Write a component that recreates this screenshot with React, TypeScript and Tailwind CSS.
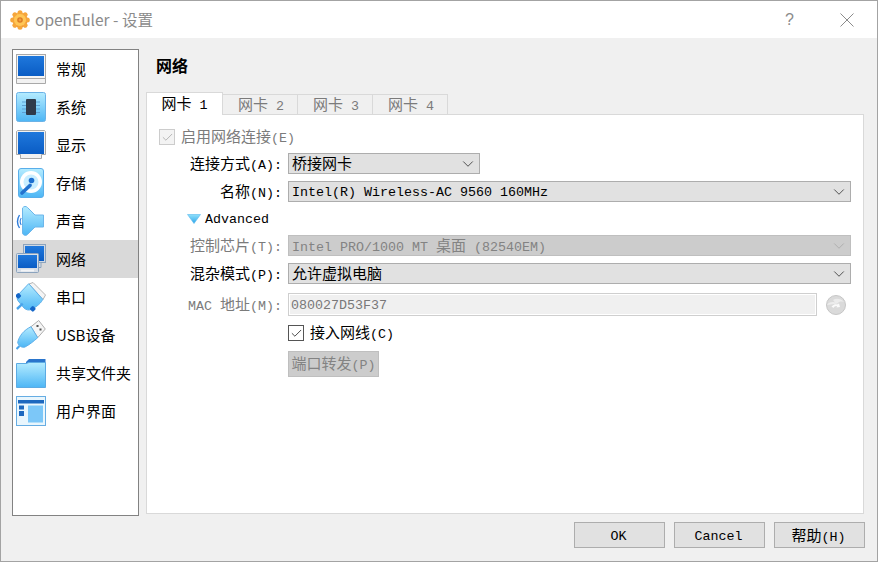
import { Check, ChevronDown } from 'lucide-react'

const FONT = "font-['Liberation_Mono','Noto_Sans_CJK_SC',monospace]"

// CJK is wider in the screenshot than the mono font allows at one size, so runs get split
function Txt({ children }: { children: string }) {
  const parts = children.match(/[\u2E80-\u9FFF]+|[^\u2E80-\u9FFF]+/g) ?? []
  return (
    <span className="whitespace-pre">
      {parts.map((p, i) =>
        /[\u2E80-\u9FFF]/.test(p) ? (
          <span key={i} className="font-['Noto_Sans_CJK_SC',sans-serif] text-[15px]">
            {p}
          </span>
        ) : (
          <span key={i} className="text-[13.33px]">
            {p}
          </span>
        ),
      )}
    </span>
  )
}

function Defs() {
  return (
    <svg className="absolute size-0">
      <defs>
        <linearGradient id="blue" x1="0" y1="0" x2="0" y2="1">
          <stop offset="0" stopColor="#1f78dc" />
          <stop offset="1" stopColor="#0a5cc4" />
        </linearGradient>
        <linearGradient id="sky" x1="0" y1="0" x2="0" y2="1">
          <stop offset="0" stopColor="#b5ecff" />
          <stop offset="1" stopColor="#4db6f5" />
        </linearGradient>
      </defs>
    </svg>
  )
}

function MonitorIcon() {
  return (
    <svg viewBox="0 0 30 30" className="size-[30px]">
      <rect x="0.5" y="0.5" width="29" height="24" fill="#f4f4f4" stroke="#a9a9a9" />
      <rect x="2" y="2" width="26" height="20" fill="url(#blue)" />
      <path d="M0.5 24.5 H29.5 V29.5 H0.5 Z" fill="#f2f2f2" stroke="#a9a9a9" />
    </svg>
  )
}

function ChipIcon() {
  return (
    <svg viewBox="0 0 30 30" className="size-[30px]">
      <rect x="0.5" y="0.5" width="29" height="29" rx="2" fill="url(#sky)" stroke="#6bb2e6" />
      <path d="M6 10H24M6 13.5H24M6 17H24M6 20.5H24" stroke="#5d9fd2" strokeWidth="1.2" />
      <rect x="10" y="7" width="10" height="16" rx="1" fill="#2f3a4a" />
    </svg>
  )
}

function DisplayIcon() {
  return (
    <svg viewBox="0 0 30 30" className="size-[30px]">
      <path d="M1.5 0.5H28.5L29.5 1.5V24.5H25.5V28.5H4.5V24.5H0.5V1.5Z" fill="#f1f1f1" stroke="#a9a9a9" />
      <rect x="2" y="2" width="26" height="22" fill="url(#blue)" />
    </svg>
  )
}

function DiskIcon() {
  return (
    <svg viewBox="0 0 30 30" className="size-[30px]">
      <rect x="2.5" y="0.5" width="25" height="29" rx="2.5" fill="url(#sky)" stroke="#59aeea" />
      <circle cx="15" cy="14" r="11" fill="#fff" />
      <circle cx="15" cy="14" r="7.5" fill="#c9eeff" />
      <circle cx="15.5" cy="12.5" r="2.8" fill="#1c6fd0" />
      <path d="M6 25 L14 17.5" stroke="#2272cf" strokeWidth="3.6" strokeLinecap="round" />
    </svg>
  )
}

function SpeakerIcon() {
  return (
    <svg viewBox="0 0 30 30" className="size-[30px]">
      <path d="M6.5 2C8 0 10 0 11.5 1.5L19 9H27.5V21H19L11.5 28.5C10 30 7.5 29.5 6.5 27.5Z" fill="url(#sky)" stroke="#6db6ea" />
      <path d="M3.5 9C1 13 1 18 3.5 22" fill="none" stroke="#2f7ddb" strokeWidth="1.4" />
      <path d="M5.2 12C4 14 4 17 5.2 19" fill="none" stroke="#2f7ddb" strokeWidth="1.1" />
    </svg>
  )
}

function NetworkIcon() {
  return (
    <svg viewBox="0 0 30 30" className="size-[30px]">
      <rect x="7.5" y="0.5" width="22" height="18" fill="#cfd8e3" stroke="#8ba3bd" />
      <rect x="9" y="2" width="19" height="15" fill="url(#blue)" />
      <path d="M25 18.5V23.5H20" fill="#d7dde5" stroke="#8ba3bd" />
      <rect x="0.5" y="9.5" width="22" height="19" rx="1" fill="#d7dee7" stroke="#8ba3bd" />
      <rect x="2" y="11" width="19" height="13" fill="url(#blue)" />
      <rect x="5" y="25.5" width="13" height="2" fill="#f2f4f7" />
    </svg>
  )
}

function SerialIcon() {
  return (
    <svg viewBox="0 0 30 30" className="size-[30px]">
      <path d="M13 2L17 0.5L29.5 13L27 17.5Z" fill="#f4f4f4" stroke="#b4b4b4" />
      <path d="M12.7 1.7L26.7 17.3C26 20 21 25 15 27.5C13 28.5 10 28 8 26L3 20C1 18 0.8 15.5 1.5 13.5Z" fill="url(#sky)" stroke="#5fb0ea" />
      <path d="M6.7 21.7L1 27" stroke="#4aa4ea" strokeWidth="2.4" />
      <rect x="0" y="11.5" width="4.6" height="4.6" rx="1.2" transform="rotate(45 2.3 13.8)" fill="#1566c8" />
      <rect x="14.5" y="24.5" width="4.6" height="4.6" rx="1.2" transform="rotate(45 16.8 26.8)" fill="#1566c8" />
    </svg>
  )
}

function UsbIcon() {
  return (
    <svg viewBox="0 0 30 30" className="size-[30px]">
      <path d="M15 6.7L22.7 0.5L29.3 9L21.7 17.7Z" fill="#f5f5f5" stroke="#adadad" />
      <rect x="20.5" y="5" width="2" height="2" fill="#555" />
      <rect x="23.5" y="8.5" width="2" height="2" fill="#555" />
      <path d="M15 6.7L21.7 17.7C18 21 13 25 9 27C6 28 2.5 26 1.7 22.5C3 16 8 10 15 6.7Z" fill="url(#sky)" stroke="#5fb0ea" />
      <path d="M3.5 26L0.5 29" stroke="#4aa4ea" strokeWidth="2.2" />
    </svg>
  )
}

function FolderIcon() {
  return (
    <svg viewBox="0 0 30 30" className="size-[30px]">
      <path d="M10 4L13 1H29.5V8H10Z" fill="#2a75cc" />
      <path d="M0.5 5.5H10L13 4.5H29.5V29.5H0.5Z" fill="url(#sky)" stroke="#5cabe3" />
    </svg>
  )
}

function UiIcon() {
  return (
    <svg viewBox="0 0 30 30" className="size-[30px]">
      <rect x="0.5" y="0.5" width="29" height="29" fill="#e9f6fd" stroke="#66ade3" />
      <rect x="2" y="4" width="26" height="3.5" fill="#1d68bf" />
      <rect x="3" y="9.5" width="5" height="4" fill="#1d68bf" />
      <rect x="3" y="15" width="5" height="5" fill="#1d68bf" />
      <rect x="12" y="9.5" width="15" height="17" fill="#7cc7f8" />
    </svg>
  )
}

function AppIcon() {
  return (
    <svg viewBox="0 0 20 20" className="size-5">
      <defs>
        <radialGradient id="gear" cx="0.4" cy="0.35" r="0.75">
          <stop offset="0" stopColor="#ffdc70" />
          <stop offset="1" stopColor="#ee8426" />
        </radialGradient>
      </defs>
      <circle cx="10" cy="10" r="7.6" fill="url(#gear)" />
      {[0, 45, 90, 135, 180, 225, 270, 315].map((a) => (
        <circle key={a} cx="10" cy="2.7" r="2.5" fill="#f6a63b" transform={`rotate(${a} 10 10)`} />
      ))}
      <circle cx="10" cy="10" r="6" fill="#ffc655" />
      <circle cx="10" cy="10" r="2.8" fill="#db7a24" />
      <circle cx="10" cy="10" r="1.4" fill="#f3a13b" />
    </svg>
  )
}

function RefreshIcon() {
  return (
    <svg viewBox="0 0 20 20" className="size-5">
      <circle cx="10" cy="10" r="9.5" fill="#dadada" stroke="#c6c6c6" />
      <path d="M1 10C3 7 6 6.5 9 7.5L7 5C10 3 15 3.5 18 7C15 6 13 6.5 11.5 8.5" fill="#ececec" />
      <path d="M5.5 11.5C8 9 10 9 11 9.5L13 8.5L14 12L10.5 12.5L11 11C9.5 10.8 8 11.5 7.5 13Z" fill="#fafafa" />
    </svg>
  )
}

function CloseIcon() {
  return (
    <svg viewBox="0 0 14 14" className="size-[14px]">
      <path d="M0.5 0.5L13.5 13.5M13.5 0.5L0.5 13.5" stroke="#8b8b8b" strokeWidth="1" />
    </svg>
  )
}

const NAV = [
  { label: '常规', icon: <MonitorIcon /> },
  { label: '系统', icon: <ChipIcon /> },
  { label: '显示', icon: <DisplayIcon /> },
  { label: '存储', icon: <DiskIcon /> },
  { label: '声音', icon: <SpeakerIcon /> },
  { label: '网络', icon: <NetworkIcon />, active: true },
  { label: '串口', icon: <SerialIcon /> },
  { label: 'USB设备', icon: <UsbIcon /> },
  { label: '共享文件夹', icon: <FolderIcon /> },
  { label: '用户界面', icon: <UiIcon /> },
]

function Combo({ value, disabled, className }: { value: string; disabled?: boolean; className?: string }) {
  return (
    <div
      className={`flex h-[21px] items-center justify-between border pl-[3px] pr-[2px] ${
        disabled ? 'border-[#bfbfbf] bg-[#cccccc] text-[#838383]' : 'border-[#adadad] bg-[#e1e1e1] text-black'
      } ${className ?? ''}`}
    >
      <Txt>{value}</Txt>
      <ChevronDown className={`size-[18px] ${disabled ? 'text-[#a8a8a8]' : 'text-[#333]'}`} strokeWidth={1.1} />
    </div>
  )
}

function Label({ text, disabled }: { text: string; disabled?: boolean }) {
  return (
    <div className={`w-[123px] shrink-0 text-right ${disabled ? 'text-[#7b7b7b]' : 'text-black'}`}>
      <Txt>{text}</Txt>
    </div>
  )
}

function Row({ label, disabled, className, children }: { label?: string; disabled?: boolean; className?: string; children: React.ReactNode }) {
  return (
    <div className={`flex items-center gap-[6px] ${className ?? ''}`}>
      {label ? <Label text={label} disabled={disabled} /> : <div className="w-[123px] shrink-0" />}
      <div className="min-w-0 flex-1">{children}</div>
    </div>
  )
}

function Tab({ label, active }: { label: string; active?: boolean }) {
  return active ? (
    <div className="relative z-10 flex h-[23px] w-[77px] items-center justify-center border border-b-0 border-[#d9d9d9] bg-white text-black">
      <Txt>{label}</Txt>
    </div>
  ) : (
    <div className="-ml-px flex h-[21px] w-[76px] items-center justify-center border border-b-0 border-[#d9d9d9] bg-[#f0f0f0] pl-[2px] text-[#7b7b7b]">
      <Txt>{label}</Txt>
    </div>
  )
}

function FootButton({ label }: { label: string }) {
  return (
    <div className="flex h-[26px] w-[91px] items-center justify-center border border-[#adadad] bg-[#e1e1e1] pt-[2px] pr-[2px] text-black">
      <Txt>{label}</Txt>
    </div>
  )
}

export default function App() {
  return (
    <div className={`flex h-[562px] w-[878px] flex-col overflow-hidden border border-[#a3a3a3] bg-[#f0f0f0] leading-none ${FONT}`}>
      <Defs />
      <div className="flex h-[37px] shrink-0 items-center bg-white pl-[9px] pr-[23px]">
        <AppIcon />
        <span className="ml-[5px] font-['Noto_Sans_CJK_SC',sans-serif] text-[15.5px] text-[#8b8b8b]">openEuler - 设置</span>
        <span className="ml-auto mr-[46px] font-['Liberation_Sans',sans-serif] text-[16px] text-[#8b8b8b]">?</span>
        <CloseIcon />
      </div>

      <div className="flex min-h-0 flex-1 gap-[7px] pl-[11px] pr-[12px] pt-[11px]">
        <div className="h-[467px] w-[127px] shrink-0 border border-[#828282] bg-white">
          {NAV.map((n) => (
            <div key={n.label} className={`flex h-[38px] items-center pl-[3px] ${n.active ? 'bg-[#d9d9d9]' : ''}`}>
              <div className="flex size-[30px] shrink-0 items-center justify-center">{n.icon}</div>
              <span className="ml-[10px] whitespace-nowrap pb-[2px] font-['Noto_Sans_CJK_SC',sans-serif] text-[15px] text-black">{n.label}</span>
            </div>
          ))}
        </div>

        <div className="flex min-w-0 flex-1 flex-col">
          <h2 className="mt-[8px] ml-[10px] h-[35px] font-['Noto_Sans_CJK_SC',sans-serif] text-[16px] font-bold text-black">网络</h2>
          <div className="flex items-end">
            <Tab label="网卡 1" active />
            <Tab label="网卡 2" />
            <Tab label="网卡 3" />
            <Tab label="网卡 4" />
          </div>
          <div className="-mt-px mr-px h-[400px] border border-[#d9d9d9] bg-white px-[12px] pt-[11px]">
            <div className="flex h-[22px] items-center text-[#7b7b7b]">
              <span className="flex size-[16px] items-center justify-center border border-[#cccccc] bg-[#f3f3f3]">
                <Check className="size-[13px] text-[#a8a8a8]" strokeWidth={1.5} />
              </span>
              <span className="ml-[6px]">
                <Txt>启用网络连接(E)</Txt>
              </span>
            </div>

            <Row label="连接方式(A):" className="mt-[5px]">
              <Combo value="桥接网卡" className="w-[192px]" />
            </Row>
            <Row label="名称(N):" className="mt-[7px]">
              <Combo value="Intel(R) Wireless-AC 9560 160MHz" />
            </Row>

            <div className="mt-[6px] flex h-[22px] items-center pl-[28px] text-black">
              <svg viewBox="0 0 14 10" className="h-[10px] w-[14px]">
                <defs>
                  <linearGradient id="tri" x1="0" y1="0" x2="0" y2="1">
                    <stop offset="0" stopColor="#8fe0fb" />
                    <stop offset="1" stopColor="#2ea6ea" />
                  </linearGradient>
                </defs>
                <path d="M0.5 0.5H13.5L7 9.5Z" fill="url(#tri)" stroke="#58b8ee" strokeWidth="0.6" />
              </svg>
              <span className="ml-[4px]">
                <Txt>Advanced</Txt>
              </span>
            </div>

            <Row label="控制芯片(T):" disabled className="mt-[5px]">
              <Combo value="Intel PRO/1000 MT 桌面 (82540EM)" disabled />
            </Row>
            <Row label="混杂模式(P):" className="mt-[7px]">
              <Combo value="允许虚拟电脑" />
            </Row>
            <Row label="MAC 地址(M):" disabled className="mt-[9px]">
              <div className="flex items-center">
                <div className="flex h-[23px] w-[529px] items-center border border-[#cfcfcf] bg-[#f0f0f0] pl-[2px] text-[#787878] shadow-[inset_0_0_0_1px_#ffffff]">
                  <Txt>080027D53F37</Txt>
                </div>
                <div className="ml-[9px]">
                  <RefreshIcon />
                </div>
              </div>
            </Row>

            <Row className="mt-[6px]">
              <div className="flex h-[22px] items-center text-black">
                <span className="flex size-[16px] items-center justify-center border border-[#555] bg-white">
                  <Check className="size-[13px] text-[#222]" strokeWidth={1.5} />
                </span>
                <span className="ml-[6px]">
                  <Txt>接入网线(C)</Txt>
                </span>
              </div>
            </Row>
            <Row className="mt-[7px]">
              <div className="flex h-[26px] w-[91px] items-center justify-center border border-[#bfbfbf] bg-[#cccccc] text-[#838383]">
                <Txt>端口转发(P)</Txt>
              </div>
            </Row>
          </div>
          <div className="mt-[8px] flex justify-end gap-[9px]">
            <FootButton label="OK" />
            <FootButton label="Cancel" />
            <FootButton label="帮助(H)" />
          </div>
        </div>
      </div>
    </div>
  )
}
